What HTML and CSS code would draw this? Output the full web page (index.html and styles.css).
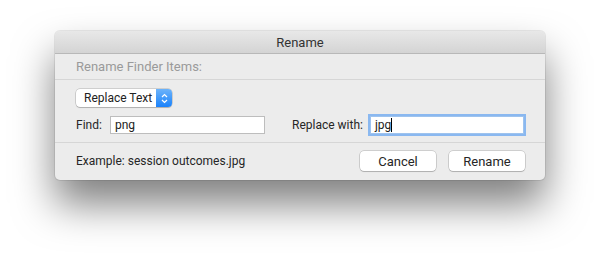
FILE: index.html
```html
<!DOCTYPE html>
<html lang="en">
<head>
    <meta charset="UTF-8">
    <title>Rename</title>
    <link rel="stylesheet" href="styles.css">
</head>
<body>
    <div class="window">
        <div class="titlebar">Rename</div>

        <div class="heading">Rename Finder Items:</div>

        <div class="options">
            <div class="popup">
                <span class="popup-label">Replace Text</span>
                <span class="popup-arrows">
                    <svg width="7" height="11" viewBox="0 0 7 11">
                        <path d="M1 4 L3.5 1.5 L6 4 M1 7 L3.5 9.5 L6 7" fill="none" stroke="#fff" stroke-width="1.2"/>
                    </svg>
                </span>
            </div>

            <div class="fields">
                <label class="field-label find-label">Find:</label>
                <div class="textbox find">png</div>
                <label class="field-label replace-label">Replace with:</label>
                <div class="textbox replace focused">jpg<span class="caret"></span></div>
            </div>
        </div>

        <div class="footer">
            <div class="example">Example: session outcomes.jpg</div>
            <div class="buttons">
                <button class="btn">Cancel</button>
                <button class="btn">Rename</button>
            </div>
        </div>
    </div>
</body>
</html>
```

FILE: styles.css
```css
html, body {
    min-height: 100vh;
}

body {
    margin: 0;
    padding: 31px 0 0 55px;
    box-sizing: border-box;
    background: #fff;
    font-family: Roboto, "Liberation Sans", Arial, sans-serif;
    font-size: 12px;
    color: #262626;
    white-space: nowrap;
}

.window {
    width: 490px;
    height: 149px;
    background: #ececec;
    border-radius: 5px;
    box-shadow: 0 24px 40px rgba(0, 0, 0, 0.5), 0 0 0 1px rgba(0, 0, 0, 0.08);
    overflow: hidden;
    box-sizing: border-box;
}

.titlebar {
    height: 23px;
    line-height: 23px;
    text-align: center;
    font-size: 13px;
    background: linear-gradient(to bottom, #e8e8e8, #d4d4d4);
    border-bottom: 1px solid #b8b8b8;
    color: #333;
    box-sizing: border-box;
}

.heading {
    height: 25px;
    line-height: 25px;
    padding-left: 21px;
    font-size: 13px;
    color: #9a9a9a;
    border-bottom: 1px solid #d6d6d6;
}

.options {
    padding: 9px 20px 0 21px;
    height: 63px;
    box-sizing: border-box;
    border-bottom: 1px solid #d6d6d6;
}

.popup {
    display: flex;
    width: 96px;
    height: 18px;
    border-radius: 4px;
    background: #fff;
    box-shadow: 0 0 0 0.5px rgba(0, 0, 0, 0.25), 0 1px 1px rgba(0, 0, 0, 0.15);
    overflow: hidden;
}

.popup-label {
    flex: 1;
    line-height: 18px;
    padding-left: 8px;
    color: #222;
}

.popup-arrows {
    width: 16px;
    display: flex;
    align-items: center;
    justify-content: center;
    background: linear-gradient(to bottom, #6cb3fa, #1a82fb);
}

.fields {
    display: flex;
    align-items: center;
    margin-top: 9px;
}

.field-label {
    color: #262626;
}

.find-label {
    width: 34px;
}

.textbox {
    height: 18px;
    line-height: 17px;
    box-sizing: border-box;
    background: #fff;
    border: 1px solid #bdbdbd;
    padding-left: 4px;
    color: #222;
}

.find {
    width: 155px;
}

.replace-label {
    width: 78px;
    margin-left: 27px;
}

.replace {
    width: 154px;
}

.focused {
    border-color: #9ec3ee;
    box-shadow: 0 0 0 2px #8ab8f0;
}

.caret {
    display: inline-block;
    width: 1px;
    height: 14px;
    background: #000;
    vertical-align: -3px;
}

.footer {
    display: flex;
    align-items: center;
    justify-content: space-between;
    height: 36px;
    padding: 0 20px 0 21px;
}

.buttons {
    display: flex;
    gap: 13px;
}

.btn {
    width: 76px;
    height: 20px;
    padding: 0;
    border: none;
    border-radius: 4px;
    background: #fff;
    box-shadow: 0 0 0 0.5px rgba(0, 0, 0, 0.25), 0 1px 1px rgba(0, 0, 0, 0.15);
    font-family: inherit;
    font-size: 13px;
    color: #262626;
}
```
